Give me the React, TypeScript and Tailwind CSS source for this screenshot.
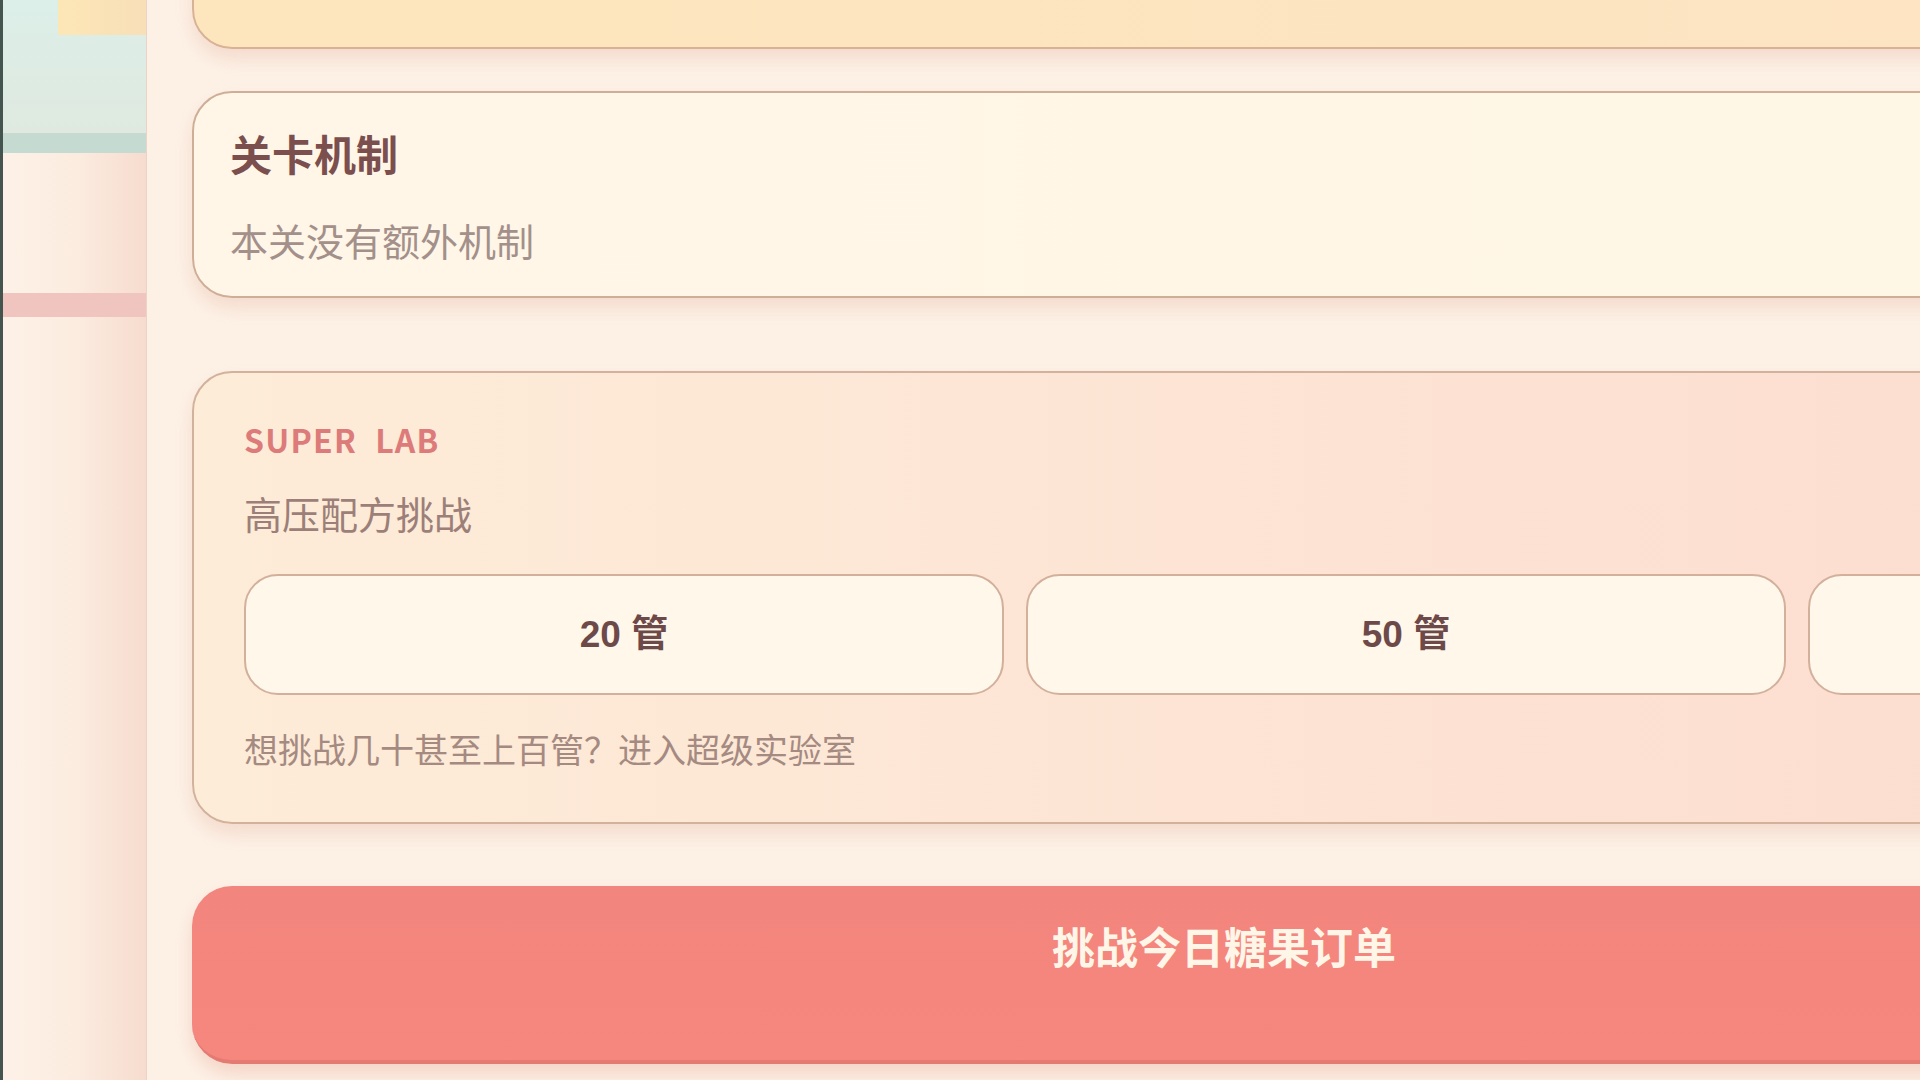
import React from 'react';

const counts = ['20 管', '50 管', ''];

export default function App() {
  return (
    <div className="flex h-[1080px] w-[1920px] overflow-hidden bg-[#fdf1e6] font-['Noto_Sans_CJK_SC',sans-serif]">
      <aside className="flex w-[147px] shrink-0 flex-col border-l-[3px] border-r border-l-[#44544f] border-r-[#ebd4c6] bg-gradient-to-r from-[#fdf1e7] via-[#fcece0] to-[#f6dccf]">
        <div className="h-[133px] bg-gradient-to-b from-[#dcefe9] to-[#dfe9df]">
          <div className="ml-[55px] h-[35px] bg-gradient-to-r from-[#fde6b6] to-[#f8dfb8]" />
        </div>
        <div className="h-[20px] bg-[#c5dbd2]" />
        <div className="h-[140px]" />
        <div className="h-[24px] bg-[#f0c5bf]" />
        <div className="flex-1" />
      </aside>

      <main className="ml-[45px] flex w-[2064px] shrink-0 flex-col">
        <div className="-mt-[100px] h-[149px] rounded-[40px] border-2 border-[#d8b294] bg-gradient-to-r from-[#fde6bd] to-[#fde3c3] shadow-[0_10px_18px_rgba(226,170,150,0.3)]" />

        <section className="mt-[42px] flex h-[207px] flex-col rounded-[40px] border-2 border-[#cfae97] bg-gradient-to-r from-[#fff6e8] to-[#fff7e4] pl-[36px] pt-[32px] shadow-[0_10px_18px_rgba(226,170,150,0.3)]">
          <h2 className="text-[42px] font-bold leading-[56px] text-[#7a4f4e]">关卡机制</h2>
          <p className="mt-[34px] text-[38px] leading-[50px] text-[#a3908a]">本关没有额外机制</p>
        </section>

        <section className="mt-[73px] flex h-[453px] flex-col rounded-[40px] border-2 border-[#d2b29c] bg-gradient-to-r from-[#fdecd8] via-[#fde4d4] to-[#fcdcd0] pl-[50px] pt-[46px] shadow-[0_10px_18px_rgba(226,170,150,0.3)]">
          <p className="flex gap-[18px] text-[32px] font-semibold leading-[40px] tracking-[0.04em] text-[#dc7b7a]">
            <span>SUPER</span>
            <span>LAB</span>
          </p>
          <p className="mt-[29px] text-[38px] leading-[50px] text-[#9c7f78]">高压配方挑战</p>
          <div className="mt-[36px] grid grid-cols-[760px_760px_760px] gap-[22px]">
            {counts.map((c, i) => (
              <button
                key={i}
                className="flex h-[121px] items-center justify-center rounded-[34px] border-2 border-[#d3b09c] bg-[#fff7ea] font-['Liberation_Sans','Noto_Sans_CJK_SC',sans-serif] text-[37px] font-bold text-[#6d4a49]"
              >
                {c}
              </button>
            ))}
          </div>
          <p className="mt-[32px] text-[34px] leading-[44px] text-[#a58a82]">想挑战几十甚至上百管？进入超级实验室</p>
        </section>

        <button className="mt-[62px] flex h-[178px] shrink-0 justify-center rounded-[40px] border-b-4 border-[#e47b73] bg-gradient-to-b from-[#f2857d] to-[#f6877f] pt-[31px] text-[43px] font-bold leading-[56px] text-[#fff6e8] shadow-[0_10px_18px_rgba(226,150,130,0.3)]">
          挑战今日糖果订单
        </button>
      </main>
    </div>
  );
}
